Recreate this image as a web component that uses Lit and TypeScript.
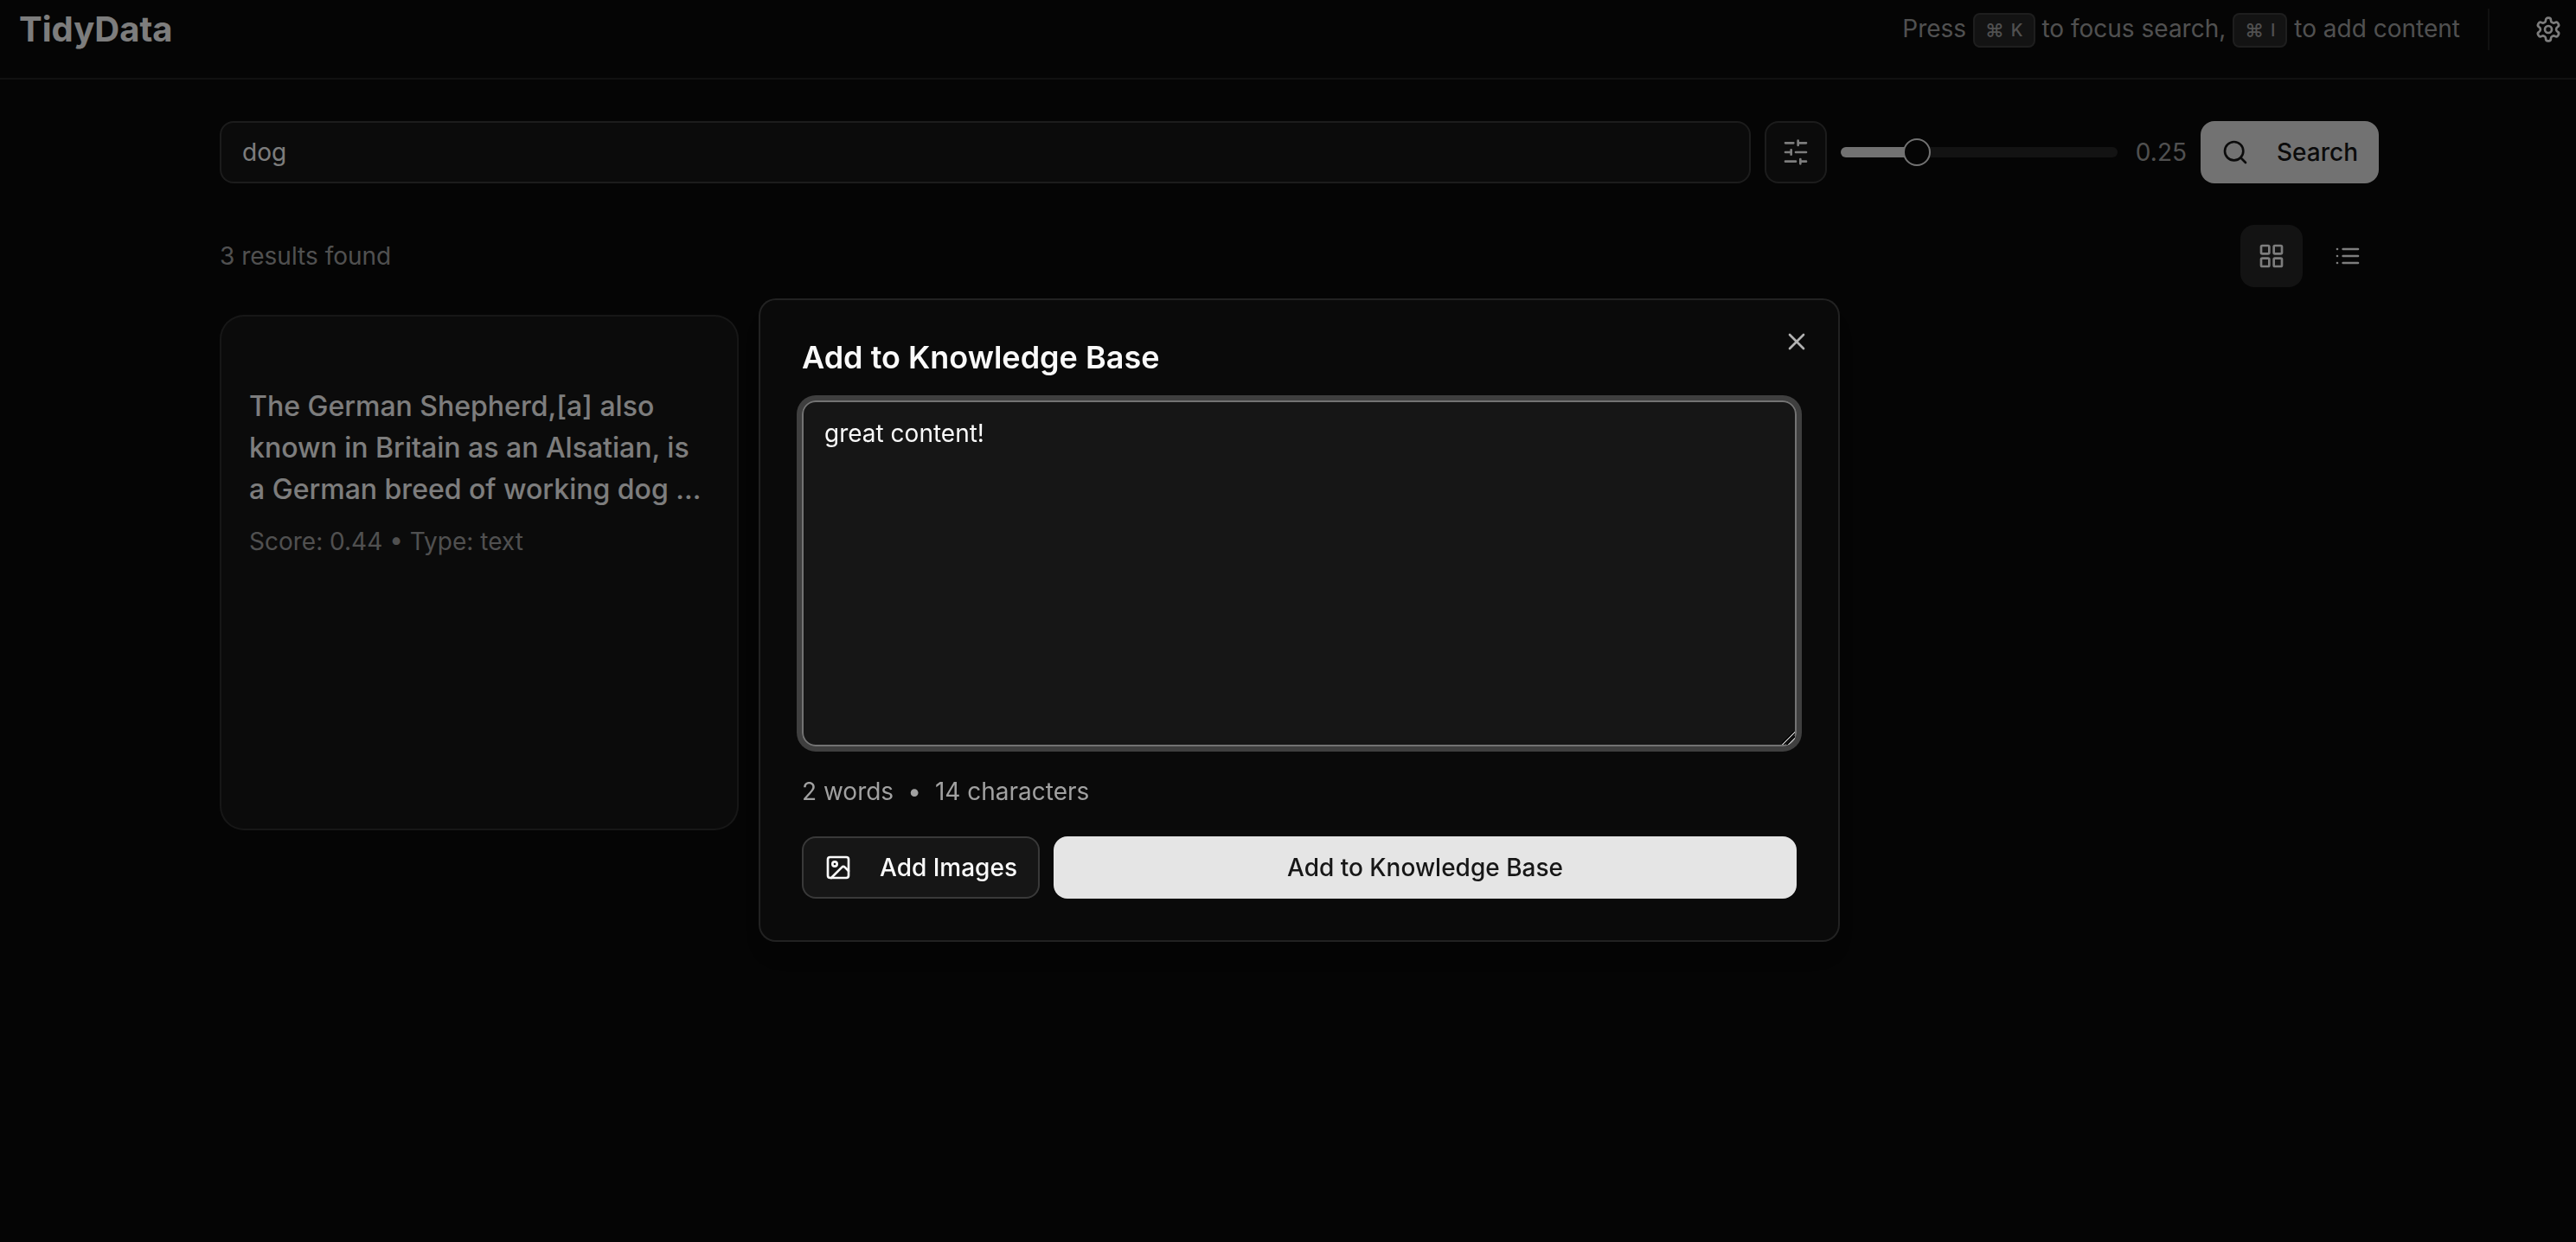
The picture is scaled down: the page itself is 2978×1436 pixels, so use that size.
import { LitElement, html, css, svg } from "lit";
import { customElement, property, state } from "lit/decorators.js";
import { classMap } from "lit/directives/class-map.js";

const icons = {
  settings: svg`<path d="M12.22 2h-.44a2 2 0 0 0-2 2v.18a2 2 0 0 1-1 1.73l-.43.25a2 2 0 0 1-2 0l-.15-.08a2 2 0 0 0-2.73.73l-.22.38a2 2 0 0 0 .73 2.73l.15.1a2 2 0 0 1 1 1.72v.51a2 2 0 0 1-1 1.74l-.15.09a2 2 0 0 0-.73 2.73l.22.38a2 2 0 0 0 2.73.73l.15-.08a2 2 0 0 1 2 0l.43.25a2 2 0 0 1 1 1.73V20a2 2 0 0 0 2 2h.44a2 2 0 0 0 2-2v-.18a2 2 0 0 1 1-1.73l.43-.25a2 2 0 0 1 2 0l.15.08a2 2 0 0 0 2.73-.73l.22-.39a2 2 0 0 0-.73-2.73l-.15-.08a2 2 0 0 1-1-1.74v-.5a2 2 0 0 1 1-1.74l.15-.09a2 2 0 0 0 .73-2.73l-.22-.38a2 2 0 0 0-2.73-.73l-.15.08a2 2 0 0 1-2 0l-.43-.25a2 2 0 0 1-1-1.73V4a2 2 0 0 0-2-2z"/><circle cx="12" cy="12" r="3"/>`,
  sliders: svg`<path d="M21 4h-7M10 4H3M21 12h-9M8 12H3M21 20h-5M12 20H3M14 2v4M8 10v4M16 18v4"/>`,
  search: svg`<circle cx="11" cy="11" r="8"/><path d="m21 21-4.3-4.3"/>`,
  grid: svg`<rect width="7" height="7" x="3" y="3" rx="1"/><rect width="7" height="7" x="14" y="3" rx="1"/><rect width="7" height="7" x="14" y="14" rx="1"/><rect width="7" height="7" x="3" y="14" rx="1"/>`,
  list: svg`<path d="M3 12h.01M3 18h.01M3 6h.01M8 12h13M8 18h13M8 6h13"/>`,
  image: svg`<rect width="18" height="18" x="3" y="3" rx="2" ry="2"/><circle cx="9" cy="9" r="2"/><path d="m21 15-3.086-3.086a2 2 0 0 0-2.828 0L6 21"/>`,
  close: svg`<path d="M18 6 6 18M6 6l12 12"/>`,
};

@customElement("ui-icon")
class UiIcon extends LitElement {
  @property() name: keyof typeof icons = "search";

  static styles = css`
    :host { display: inline-flex; flex: none; width: 32px; height: 32px; }
    .icon {
      width: 100%;
      height: 100%;
      fill: none;
      stroke: currentColor;
      stroke-width: 2;
      stroke-linecap: round;
      stroke-linejoin: round;
    }
  `;

  render() {
    return html`<svg class="icon" viewBox="0 0 24 24" aria-hidden="true">${icons[this.name]}</svg>`;
  }
}

interface Result {
  title: string;
  score: number;
  type: string;
}

@customElement("app-root")
class AppRoot extends LitElement {
  @state() private query = "dog";
  @state() private threshold = 0.25;
  @state() private view: "grid" | "list" = "grid";
  @state() private content = "great content!";
  @state() private dialogOpen = true;

  private results: Result[] = [
    {
      title: "The German Shepherd,[a] also known in Britain as an Alsatian, is a German breed of working dog ...",
      score: 0.44,
      type: "text",
    },
  ];

  static styles = css`
    :host {
      --background: #0a0a0a;
      --foreground: #fafafa;
      --muted: #a1a1a1;
      --primary: #e5e5e5;
      --secondary: #262626;
      --border: rgb(255 255 255 / 0.1);
      --input: rgb(255 255 255 / 0.15);
      --field: rgb(255 255 255 / 0.05);
      --ring: #737373;
      --scroll-gutter: 26px;
      display: block;
      box-sizing: border-box;
      min-height: 100vh;
      background: var(--background);
      color: var(--foreground);
      font: 400 28px/40px Inter, "Liberation Sans", sans-serif;
      color-scheme: dark;
    }
    *, *::before, *::after { box-sizing: border-box; }
    h1, h2, h3, p { margin: 0; }
    button, input, textarea { font: inherit; color: inherit; margin: 0; }

    .header {
      display: flex;
      align-items: center;
      justify-content: space-between;
      padding: 10px 0 32px 22px;
      border-bottom: 2px solid var(--border);
    }
    .brand { font-size: 40px; line-height: 48px; font-weight: 700; }
    .header-side { display: flex; align-items: center; height: 48px; }
    .hint { color: var(--muted); }
    .kbd {
      display: inline-flex;
      align-items: center;
      gap: 8px;
      height: 40px;
      padding: 0 12px;
      border: 2px solid var(--border);
      border-radius: 8px;
      background: var(--secondary);
      font: 500 20px/36px Inter, "Liberation Sans", sans-serif;
      vertical-align: middle;
    }
    .kbd-mod { font-size: 22px; }
    .divider { width: 2px; height: 48px; margin: 0 36px 0 32px; background: var(--border); }

    .button {
      display: inline-flex;
      align-items: center;
      justify-content: center;
      gap: 32px;
      height: 72px;
      padding: 0 24px;
      border: 0;
      border-radius: 16px;
      background: transparent;
      font-weight: 500;
      white-space: nowrap;
      cursor: pointer;
    }
    .icon-only { width: 72px; padding: 0; }
    .in-header { width: 64px; height: 48px; }
    .outline { border: 2px solid var(--input); background: var(--field); }
    .primary { background: var(--primary); color: #171717; }
    .pressed { background: var(--secondary); }

    .main {
      max-width: 2522px;
      margin: 0 auto;
      padding: 48px 0 48px var(--scroll-gutter);
    }
    .search { display: flex; align-items: center; gap: 16px; }
    .query {
      flex: 1;
      min-width: 0;
      height: 72px;
      padding: 0 24px;
      border: 2px solid var(--input);
      border-radius: 16px;
      background: var(--field);
      outline: none;
    }
    .threshold { width: 64px; text-align: right; color: var(--muted); }
    .slider {
      appearance: none;
      width: 320px;
      height: 32px;
      background: transparent;
    }
    .slider::-webkit-slider-runnable-track {
      height: 12px;
      border-radius: 6px;
      background: linear-gradient(var(--primary), var(--primary)) 0 0 / var(--fill) 100% no-repeat var(--secondary);
    }
    .slider::-webkit-slider-thumb {
      appearance: none;
      width: 32px;
      height: 32px;
      margin-top: -10px;
      border: 2px solid var(--primary);
      border-radius: 50%;
      background: var(--background);
    }

    .toolbar {
      display: flex;
      align-items: center;
      justify-content: space-between;
      margin: 48px 0 32px;
      color: var(--muted);
    }
    .views { display: flex; gap: 16px; color: var(--foreground); }

    .results { display: grid; gap: 32px; }
    .as-grid { grid-template-columns: repeat(4, minmax(0, 1fr)); }
    .card {
      min-height: 596px;
      padding: 80px 32px 32px;
      border: 2px solid var(--border);
      border-radius: 28px;
      background: #171717;
    }
    .card-title { font-size: 32px; line-height: 48px; font-weight: 500; }
    .card-meta { margin-top: 16px; color: var(--muted); }

    .overlay {
      position: fixed;
      inset: 0;
      display: grid;
      place-items: center;
      padding: 0 0 2px var(--scroll-gutter);
      background: rgb(0 0 0 / 0.5);
    }
    .dialog {
      position: relative;
      display: flex;
      flex-direction: column;
      gap: 32px;
      width: 100%;
      max-width: 1250px;
      padding: 48px;
      border: 2px solid var(--border);
      border-radius: 20px;
      background: var(--background);
      box-shadow: 0 20px 30px -6px rgb(0 0 0 / 0.1), 0 8px 12px -8px rgb(0 0 0 / 0.1);
    }
    .dialog-title { font-size: 36px; line-height: 36px; font-weight: 600; }
    .close {
      position: absolute;
      top: 32px;
      right: 32px;
      display: flex;
      padding: 0;
      border: 0;
      background: none;
      opacity: 0.7;
      cursor: pointer;
    }
    .content {
      display: block;
      width: 100%;
      height: 400px;
      padding: 16px 24px;
      border: 2px solid var(--ring);
      border-radius: 16px;
      outline: none;
      background: var(--field);
      box-shadow: 0 0 0 6px rgb(115 115 115 / 0.5);
      resize: vertical;
    }
    .content::-webkit-resizer {
      background: linear-gradient(
        135deg,
        transparent 42%,
        #000 42% 47%,
        #a8a8a8 47% 54%,
        #000 54% 59%,
        transparent 59% 66%,
        #000 66% 71%,
        #a8a8a8 71% 78%,
        transparent 78%
      );
    }
    .counts { display: flex; gap: 16px; color: var(--muted); }
    .actions { display: flex; gap: 16px; }
    .grow { flex: 1; }
  `;

  private get words() {
    return this.content.split(/\s+/).filter(Boolean).length;
  }

  private renderDialog() {
    return html`
      <div class="overlay">
        <section class="dialog" role="dialog" aria-modal="true" aria-labelledby="dialog-title">
          <h2 class="dialog-title" id="dialog-title">Add to Knowledge Base</h2>
          <textarea
            class="content"
            aria-labelledby="dialog-title"
            spellcheck="false"
            .value=${this.content}
            @input=${(e: Event) => (this.content = (e.target as HTMLTextAreaElement).value)}
          ></textarea>
          <div class="counts">
            <span>${this.words} words</span><span>•</span><span>${this.content.length} characters</span>
          </div>
          <div class="actions">
            <button class="button outline" type="button"><ui-icon name="image"></ui-icon>Add Images</button>
            <button class="button primary grow" type="button">Add to Knowledge Base</button>
          </div>
          <button class="close" type="button" aria-label="Close" @click=${() => (this.dialogOpen = false)}>
            <ui-icon name="close"></ui-icon>
          </button>
        </section>
      </div>
    `;
  }

  private renderView(view: "grid" | "list") {
    const classes = { button: true, "icon-only": true, pressed: this.view === view };
    return html`<button
      class=${classMap(classes)}
      type="button"
      aria-label="${view} view"
      aria-pressed=${this.view === view}
      @click=${() => (this.view = view)}
    ><ui-icon name=${view}></ui-icon></button>`;
  }

  render() {
    return html`
      <header class="header">
        <h1 class="brand">TidyData</h1>
        <div class="header-side">
          <p class="hint">
            Press <kbd class="kbd"><span class="kbd-mod">⌘</span>K</kbd> to focus search,
            <kbd class="kbd"><span class="kbd-mod">⌘</span>I</kbd> to add content
          </p>
          <div class="divider"></div>
          <button class="button in-header" type="button" aria-label="Settings"><ui-icon name="settings"></ui-icon></button>
        </div>
      </header>
      <main class="main">
        <form class="search" @submit=${(e: Event) => e.preventDefault()}>
          <input
            class="query"
            type="text"
            aria-label="Search"
            .value=${this.query}
            @input=${(e: Event) => (this.query = (e.target as HTMLInputElement).value)}
          />
          <button class="button icon-only outline" type="button" aria-label="Filters"><ui-icon name="sliders"></ui-icon></button>
          <input
            class="slider"
            type="range"
            aria-label="Score threshold"
            min="0"
            max="1"
            step="0.01"
            .value=${String(this.threshold)}
            style="--fill: calc(16px + (100% - 32px) * ${this.threshold})"
            @input=${(e: Event) => (this.threshold = Number((e.target as HTMLInputElement).value))}
          />
          <span class="threshold">${this.threshold.toFixed(2)}</span>
          <button class="button primary" type="submit"><ui-icon name="search"></ui-icon>Search</button>
        </form>
        <div class="toolbar">
          <p>3 results found</p>
          <div class="views">${this.renderView("grid")}${this.renderView("list")}</div>
        </div>
        <div class=${classMap({ results: true, "as-grid": this.view === "grid" })}>
          ${this.results.map(
            (r) => html`<article class="card">
              <h3 class="card-title">${r.title}</h3>
              <p class="card-meta">Score: ${r.score.toFixed(2)} • Type: ${r.type}</p>
            </article>`
          )}
        </div>
      </main>
      ${this.dialogOpen ? this.renderDialog() : null}
    `;
  }
}
